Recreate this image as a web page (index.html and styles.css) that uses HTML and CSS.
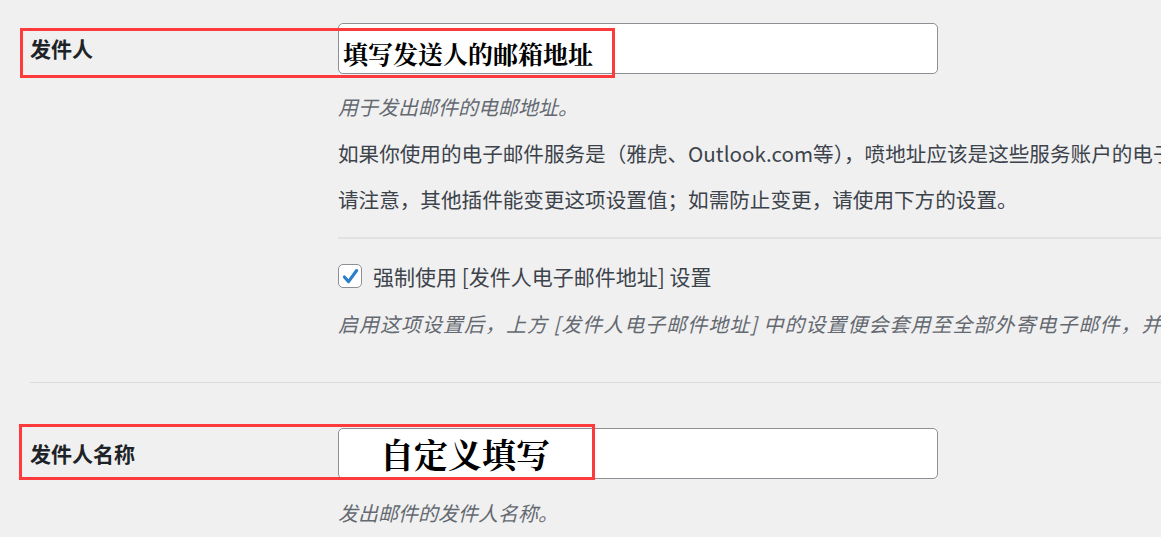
FILE: index.html
```html
<!DOCTYPE html>
<html>
<head>
    <meta charset="UTF-8">
    <title>电子邮件设置</title>
    <link rel="stylesheet" href="styles.css">
</head>
<body>
<div class="page">
    <section class="row row-from">
        <div class="mark mark-from"></div>
        <div class="label">发件人</div>
        <div class="field">
            <input class="text-input input-from" type="text" value="填写发送人的邮箱地址"/>
            <p class="desc">用于发出邮件的电邮地址。</p>
            <p class="note">如果你使用的电子邮件服务是（雅虎、Outlook.com等），喷地址应该是这些服务账户的电子邮件地址。</p>
            <p class="note">请注意，其他插件能变更这项设置值；如需防止变更，请使用下方的设置。</p>

            <div class="sub">
                <label class="check-row">
                    <span class="check">
                        <svg viewBox="0 0 24 24" width="21" height="21"><path d="M5 12.5 L9.8 17.8 L19 5.2" fill="none" stroke="#2f7fc6" stroke-width="3.6" stroke-linecap="round" stroke-linejoin="round"/></svg>
                    </span>
                    强制使用 [发件人电子邮件地址] 设置
                </label>
                <p class="desc desc-wide">启用这项设置后，上方 [发件人电子邮件地址] 中的设置便会套用至全部外寄电子邮件，并覆盖其他插件的设置。</p>
            </div>
        </div>
    </section>

    <section class="row row-name">
        <div class="mark mark-name"></div>
        <div class="label">发件人名称</div>
        <div class="field">
            <input class="text-input input-name" type="text" value="自定义填写"/>
            <p class="desc">发出邮件的发件人名称。</p>
        </div>
    </section>
</div>
</body>
</html>
```

FILE: styles.css
```css
* {
    margin: 0;
    padding: 0;
    box-sizing: border-box;
}

body {
    background: #f0f0f1;
    font-family: "Noto Sans CJK SC", "Noto Sans", sans-serif;
    font-size: 20px;
    color: #3c434a;
    overflow: hidden;
}

.page {
    width: 1161px;
    height: 537px;
    overflow: hidden;
}

/*每一行: 左边标题, 右边设置项*/
.row {
    position: relative;
    display: grid;
    grid-template-columns: 308px 1fr;
    margin-left: 30px;
}

.row-from {
    padding: 23px 0 43px;
    border-bottom: 1px solid #dcdcde;
}

.row-name {
    padding-top: 45px;
}

.label {
    font-size: 21px;
    font-weight: bold;
    line-height: 51px;
    color: #1d2327;
}

.field {
    min-width: 0;
    white-space: nowrap;
}

.text-input {
    display: block;
    width: 600px;
    height: 51px;
    border: 1px solid #8c8f94;
    border-radius: 5px;
    background: #fff;
    color: #000;
    font-family: "Noto Serif CJK SC", "Noto Sans CJK SC", serif;
    font-weight: bold;
    outline: none;
}

.input-from {
    padding: 8px 4px 0;
    font-size: 25px;
}

.input-name {
    padding: 0 4px 0 41px;
    font-size: 34px;
}

.desc {
    margin-top: 18px;
    line-height: 30px;
    font-style: italic;
    color: #646970;
}

.desc-wide {
    letter-spacing: 1px;
}

.row-name .desc {
    margin-top: 19px;
}

.note {
    margin-top: 16px;
    font-size: 20.6px;
    line-height: 30px;
}

.sub {
    margin-top: 23px;
    padding-top: 22px;
    border-top: 2px solid #e1e1e2;
}

.check-row {
    display: flex;
    align-items: center;
    gap: 11px;
    height: 30px;
    font-size: 21px;
    line-height: 30px;
}

.check {
    display: flex;
    align-items: center;
    justify-content: center;
    width: 24px;
    height: 24px;
    border: 1px solid #8c8f94;
    border-radius: 5px;
    background: #fff;
}

/*截图上的红色标注框*/
.mark {
    position: absolute;
    z-index: 1;
    border: 3px solid #fd3a3c;
    pointer-events: none;
}

.mark-from {
    top: 28px;
    left: -10px;
    width: 595px;
    height: 50px;
}

.mark-name {
    top: 41px;
    left: -11px;
    width: 576px;
    height: 56px;
}
```
